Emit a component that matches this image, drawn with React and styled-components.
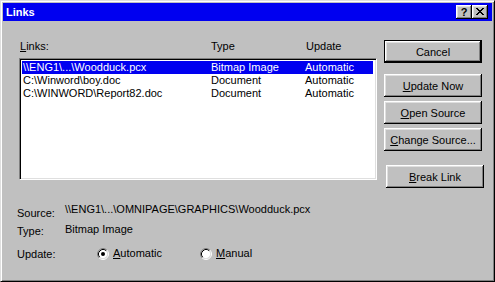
import React from "react";
import styled, { createGlobalStyle } from "styled-components";

// Global

const GlobalStyle = createGlobalStyle`
  html, body {
    margin: 0;
    padding: 0;
    background: #c0c0c0;
  }
  * {
    box-sizing: border-box;
  }
  body {
    font-family: "Liberation Sans", Arial, sans-serif;
    font-size: 11px;
    color: #000;
  }
`;

// Styled Components

const Window = styled.div`
  width: 495px;
  height: 282px;
  background: #c0c0c0;
  border: 1px solid;
  border-color: #dfdfdf #000 #000 #dfdfdf;
  box-shadow: inset 1px 1px #fff, inset -1px -1px #808080;
  padding: 2px;
  display: flex;
  flex-direction: column;
`;

const TitleBar = styled.div`
  height: 18px;
  background: #0000f0;
  display: flex;
  align-items: center;
  justify-content: space-between;
  padding: 0 4px 0 3px;
`;

const Title = styled.span`
  color: #fff;
  font-weight: bold;
  font-size: 11px;
  line-height: 18px;
`;

const TitleButtons = styled.div`
  display: flex;
`;

const TitleButton = styled.div`
  width: 16px;
  height: 14px;
  background: #c0c0c0;
  box-shadow: inset -1px -1px #000, inset 1px 1px #fff, inset -2px -2px #808080,
    inset 2px 2px #dfdfdf;
  display: flex;
  align-items: center;
  justify-content: center;
  font-weight: bold;
  font-size: 11px;
  line-height: 14px;
  padding-bottom: 1px;
`;

const Body = styled.div`
  display: grid;
  grid-template-columns: 358px 98px;
  column-gap: 7px;
  padding: 19px 0 0 16px;
`;

const LeftColumn = styled.div`
  display: flex;
  flex-direction: column;
`;

const HeaderRow = styled.div`
  display: grid;
  grid-template-columns: 191px 95px 1fr;
  padding-left: 1px;
  height: 13px;
  line-height: 13px;
  margin-bottom: 5px;
`;

const ListBox = styled.div`
  height: 122px;
  background: #fff;
  border: 1px solid;
  border-color: #808080 #fff #fff #808080;
  box-shadow: inset 1px 1px #000, inset -1px -1px #dfdfdf;
  padding: 2px 2px 0 2px;
`;

const ListRow = styled.div`
  display: grid;
  grid-template-columns: 188px 94px 1fr;
  height: 13px;
  line-height: 13px;
  padding-left: 1px;
  margin-right: 1px;
  background: ${(p) => (p.$selected ? "#0000f0" : "transparent")};
  color: ${(p) => (p.$selected ? "#fff" : "#000")};
  white-space: nowrap;
`;

const ButtonColumn = styled.div`
  display: flex;
  flex-direction: column;
  align-items: flex-start;
`;

const Button = styled.button`
  width: 98px;
  height: 23px;
  margin-top: ${(p) => p.$gap || 0}px;
  margin-left: ${(p) => p.$shift || 0}px;
  padding: 0;
  background: #c0c0c0;
  border: ${(p) => (p.$default ? "1px solid #000" : "none")};
  box-shadow: inset -1px -1px #000, inset 1px 1px #fff, inset -2px -2px #808080,
    inset 2px 2px #dfdfdf;
  font-family: "Liberation Sans", Arial, sans-serif;
  font-size: 11px;
  color: #000;
  cursor: default;
`;

const Info = styled.div`
  display: flex;
  flex-direction: column;
  padding-left: 14px;
`;

const InfoRow = styled.div`
  display: grid;
  grid-template-columns: 48px 1fr;
  align-items: start;
  margin-top: ${(p) => p.$gap || 0}px;
`;

const Label = styled.div`
  line-height: 13px;
  padding-top: ${(p) => p.$drop || 0}px;
`;

const Value = styled.div`
  line-height: 13px;
  white-space: nowrap;
`;

const RadioGroup = styled.div`
  display: grid;
  grid-template-columns: 103px auto;
  padding-left: 32px;
  margin-top: -1px;
`;

const RadioOption = styled.label`
  display: flex;
  align-items: center;
  gap: 4px;
  line-height: 13px;
`;

// Parts

function Radio({ checked }) {
  return (
    <svg width="12" height="12" viewBox="0 0 12 12">
      <circle cx="6" cy="6" r="4.5" fill="#fff" />
      <path d="M2.11 9.89 A5.5 5.5 0 0 1 9.89 2.11" fill="none" stroke="#808080" />
      <path d="M9.89 2.11 A5.5 5.5 0 0 1 2.11 9.89" fill="none" stroke="#fff" />
      <path d="M2.82 9.18 A4.5 4.5 0 0 1 9.18 2.82" fill="none" stroke="#000" />
      <path d="M9.18 2.82 A4.5 4.5 0 0 1 2.82 9.18" fill="none" stroke="#dfdfdf" />
      {checked && <circle cx="6" cy="6" r="2" fill="#000" />}
    </svg>
  );
}

const rows = [
  ["\\\\ENG1\\...\\Woodduck.pcx", "Bitmap Image", "Automatic"],
  ["C:\\Winword\\boy.doc", "Document", "Automatic"],
  ["C:\\WINWORD\\Report82.doc", "Document", "Automatic"],
];

function App() {
  return (
    <>
      <GlobalStyle />
      <Window>
        <TitleBar>
          <Title>Links</Title>
          <TitleButtons>
            <TitleButton>?</TitleButton>
            <TitleButton>
              <svg width="8" height="7" viewBox="0 0 8 7">
                <path
                  d="M0 0h2v1h1v1h2v-1h1v-1h2v1h-1v1h-1v1h-1v1h1v1h1v1h1v1h-2v-1h-1v-1h-2v1h-1v1h-2v-1h1v-1h1v-1h1v-1h-1v-1h-1v-1h-1z"
                  fill="#000"
                />
              </svg>
            </TitleButton>
          </TitleButtons>
        </TitleBar>

        <Body>
          <LeftColumn>
            <HeaderRow>
              <span>
                <u>L</u>inks:
              </span>
              <span>Type</span>
              <span>Update</span>
            </HeaderRow>
            <ListBox>
              {rows.map((r, i) => (
                <ListRow key={i} $selected={i === 0}>
                  <span>{r[0]}</span>
                  <span>{r[1]}</span>
                  <span>{r[2]}</span>
                </ListRow>
              ))}
            </ListBox>
          </LeftColumn>

          <ButtonColumn>
            <Button $default>Cancel</Button>
            <Button $gap={11}>
              <u>U</u>pdate Now
            </Button>
            <Button $gap={4}>
              <u>O</u>pen Source
            </Button>
            <Button $gap={4}>
              <u>C</u>hange Source...
            </Button>
            <Button $gap={14} $shift={2}>
              <u>B</u>reak Link
            </Button>
          </ButtonColumn>
        </Body>

        <Info>
          <InfoRow $gap={15}>
            <Label $drop={4}>Source:</Label>
            <Value>\\ENG1\...\OMNIPAGE\GRAPHICS\Woodduck.pcx</Value>
          </InfoRow>
          <InfoRow $gap={3}>
            <Label $drop={2}>Type:</Label>
            <Value>Bitmap Image</Value>
          </InfoRow>
          <InfoRow $gap={10}>
            <Label>Update:</Label>
            <RadioGroup>
              <RadioOption>
                <Radio checked />
                <span>
                  <u>A</u>utomatic
                </span>
              </RadioOption>
              <RadioOption>
                <Radio />
                <span>
                  <u>M</u>anual
                </span>
              </RadioOption>
            </RadioGroup>
          </InfoRow>
        </Info>
      </Window>
    </>
  );
}

export default App;
